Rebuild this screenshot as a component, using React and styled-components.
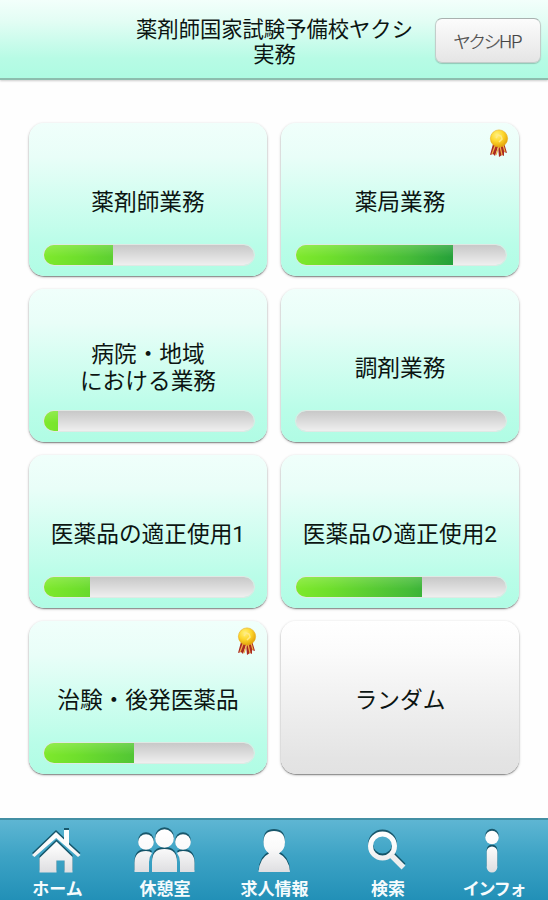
import React from 'react';
import styled, { createGlobalStyle } from 'styled-components';

const GlobalStyle = createGlobalStyle`
  * { box-sizing: border-box; }
  body { margin: 0; background: #fefefe; font-family: 'Noto Sans CJK JP', sans-serif; color: #0c1512; }
  button { font: inherit; color: inherit; border: 0; padding: 0; }
`;

const Screen = styled.div`
  width: 548px;
  height: 900px;
  display: flex;
  flex-direction: column;
  overflow: hidden;
`;

const Header = styled.header`
  height: 80px;
  flex: none;
  display: grid;
  grid-template-columns: 1fr 281px 1fr;
  background: linear-gradient(#f3fffb 0, #e2fdf4 28%, #b7fbe5 75%, #aefbe2 100%);
  border-bottom: 2px solid #8dbdae;
  box-shadow: 0 1px 2px rgba(0, 0, 0, 0.2);
`;

const Title = styled.h1`
  grid-column: 2;
  margin: 0;
  padding: 15px 0 0 1px;
  font-size: 21.3px;
  line-height: 25px;
  font-weight: 400;
  text-align: center;
  white-space: pre-line;
`;

const SiteButton = styled.button`
  justify-self: end;
  width: 106px;
  height: 45px;
  margin: 18px 7px 0 0;
  padding: 0 1px 1px 0;
  border: 1px solid #c3cdca;
  border-top-color: #a9b1af;
  border-radius: 7px;
  background: linear-gradient(#fcfcfc, #e5e5e5);
  box-shadow: 0 1px 1px rgba(0, 0, 0, 0.2);
  color: #444;
  font-family: Roboto, 'Noto Sans CJK JP', sans-serif;
  font-size: 17.5px;
  font-weight: 300;
  letter-spacing: -2.2px;
  -webkit-text-stroke: 0.25px #444;
  white-space: nowrap;
`;

const Latin = styled.span`
  font-size: 18px;
  letter-spacing: -0.6px;
`;

const Grid = styled.main`
  flex: 1;
  display: grid;
  grid-template-columns: 238px 238px;
  grid-auto-rows: 153px;
  gap: 13px 14px;
  padding: 43px 0 0 29px;
`;

const Card = styled.button`
  position: relative;
  display: flex;
  flex-direction: column;
  border-radius: 15px;
  background: ${({ $plain }) =>
    $plain
      ? 'linear-gradient(#ffffff 0, #fbfbfb 20%, #e4e4e4 90%, #e2e2e2 100%)'
      : 'linear-gradient(#f0fffb 0, #e9fef8 22%, #b9fde8 80%, #b0fce4 100%)'};
  box-shadow: 0 1px 1px rgba(0, 0, 0, 0.32), 0 1px 3px rgba(0, 0, 0, 0.28);
`;

const Label = styled.span`
  height: 158px;
  width: 100%;
  flex: none;
  display: flex;
  align-items: center;
  justify-content: center;
  font-family: Roboto, 'Noto Sans CJK JP', sans-serif;
  font-size: 22.7px;
  line-height: 27px;
  white-space: pre-line;
  text-align: center;
`;

const Track = styled.span`
  display: block;
  flex: none;
  width: 212px;
  height: 22px;
  margin: -37px 0 0 14px;
  border: 1.5px solid #dfe9e4;
  border-radius: 11px;
  overflow: hidden;
  background: linear-gradient(#c8c8c8, #d7d7d7 40%, #efefef);
  background-clip: padding-box;
`;

const Fill = styled.span`
  display: block;
  height: 100%;
  background:
    linear-gradient(rgba(255, 255, 255, 0.16), rgba(255, 255, 255, 0) 60%),
    linear-gradient(105deg, #80ea2c 0, #6fdf2c 35px, #46bc38 112px, #1d9a3a 165px, #118a38 210px);
  background-size: 210px 100%;
`;

const Medal = styled.svg`
  position: absolute;
  top: 6px;
  right: 10px;
  width: 20px;
  height: 30px;
`;

const Nav = styled.nav`
  flex: none;
  height: 82px;
  display: grid;
  grid-template-columns: 115px 100px 119px 108px 104px;
  border-top: 2px solid #438fa4;
  background: linear-gradient(#5eb6d3, #3da3c5 45%, #2290b7);
`;

const NavItem = styled.button`
  display: flex;
  flex-direction: column;
  align-items: center;
  background: none;
`;

const NavIcon = styled.svg`
  width: 64px;
  height: 48px;
  margin-top: 6px;
  flex: none;
  overflow: visible;
  filter: drop-shadow(0 -1.2px 0.5px rgba(0, 50, 65, 0.7));
`;

const NavLabel = styled.span`
  height: 24px;
  margin-top: 2px;
  color: #f5fbfd;
  font-size: 17px;
  font-weight: 700;
  line-height: 24px;
  letter-spacing: ${({ $tight }) => ($tight ? '-1.3px' : '0')};
  white-space: nowrap;
`;

const cards = [
  { label: '薬剤師業務', fill: 69 },
  { label: '薬局業務', fill: 157, medal: true },
  { label: '病院・地域\nにおける業務', fill: 14 },
  { label: '調剤業務', fill: 0 },
  { label: '医薬品の適正使用1', fill: 46 },
  { label: '医薬品の適正使用2', fill: 126 },
  { label: '治験・後発医薬品', fill: 90, medal: true },
  { label: 'ランダム', plain: true },
];

function Award() {
  return (
    <Medal viewBox="0 0 20 30">
      <defs>
        <radialGradient id="gold" cx="38%" cy="30%" r="75%">
          <stop offset="0" stopColor="#fff27c" />
          <stop offset="0.5" stopColor="#fdd62b" />
          <stop offset="1" stopColor="#e09d08" />
        </radialGradient>
      </defs>
      <path d="M4 15 1 26l3-1 2 2 3-9 1 10 3-2 2 1 0-4 3 1-3-10z" fill="#ab2a20" />
      <path d="m6 17-3 8M10 17l-3 9M11 17l2 9M14 16l2 7" stroke="#efb14b" strokeWidth="1.2" />
      <circle cx="10" cy="9.5" r="8.6" fill="url(#gold)" stroke="#e9ac18" strokeWidth="0.6" />
      <path d="m7 9 2-3 3 1 1 3-3 3" fill="none" stroke="#ffe984" strokeWidth="1.5" />
    </Medal>
  );
}

const nav = [
  {
    label: 'ホーム',
    art: (
      <>
        <path d="M30.5 15.500 13.500 32v14.500h17V34.500h8v12h8V31z" />
        <path d="M6 29 30 6l8 7.500V4h5v14.500L54.500 29l-2.500 2L30.200 12 8.500 31z" />
      </>
    ),
  },
  {
    label: '休憩室',
    art: (
      <>
        <circle cx="13" cy="16" r="7.800" />
        <circle cx="50" cy="16" r="7.800" />
        <path d="M1.500 46V37q0-12 11.500-12 4 0 6 2-3 4-3 9v10zM61.500 46V37q0-12-11.500-12-4 0-6 2 3 4 3 9v10z" />
        <circle cx="31.500" cy="12.500" r="9.300" />
        <path d="M19 46V36q0-13 12.500-13T44 36v10z" />
      </>
    ),
  },
  {
    label: '求人情報',
    art: <path d="M15.500 46q1-14 10.500-18.500-5.500-4-5.500-11.500Q20.500 5 31 5t11 11q0 7.500-6 11.500 10 4.500 11 18.500z" />,
  },
  {
    label: '検索',
    art: (
      <>
        <circle cx="26.500" cy="20" r="12" fill="none" stroke="url(#silver)" strokeWidth="5" />
        <path d="m35 29 12.500 12.500" stroke="#eee" strokeWidth="5.500" strokeLinecap="butt" />
      </>
    ),
  },
  {
    label: 'インフォ',
    tight: true,
    art: (
      <>
        <circle cx="30" cy="11.500" r="6.700" />
        <rect x="24.700" y="20.500" width="10.600" height="26" rx="5.300" />
      </>
    ),
  },
];

export default function App() {
  return (
    <Screen>
      <GlobalStyle />
      <Header>
        <Title>{'薬剤師国家試験予備校ヤクシ\n実務'}</Title>
        <SiteButton>
          ヤクシ<Latin>HP</Latin>
        </SiteButton>
      </Header>
      <Grid>
        {cards.map((card) => (
          <Card key={card.label} $plain={card.plain}>
            <Label>{card.label}</Label>
            {!card.plain && (
              <Track>
                <Fill style={{ width: card.fill }} />
              </Track>
            )}
            {card.medal && <Award />}
          </Card>
        ))}
      </Grid>
      <Nav>
        {nav.map((item) => (
          <NavItem key={item.label}>
            <NavIcon viewBox="0 0 64 48" fill="url(#silver)">
              <defs>
                <linearGradient id="silver" gradientUnits="userSpaceOnUse" x1="0" y1="5" x2="0" y2="48">
                  <stop offset="0" stopColor="#fff" />
                  <stop offset="0.4" stopColor="#fafafa" />
                  <stop offset="1" stopColor="#dcdcdf" />
                </linearGradient>
              </defs>
              {item.art}
            </NavIcon>
            <NavLabel $tight={item.tight}>{item.label}</NavLabel>
          </NavItem>
        ))}
      </Nav>
    </Screen>
  );
}
